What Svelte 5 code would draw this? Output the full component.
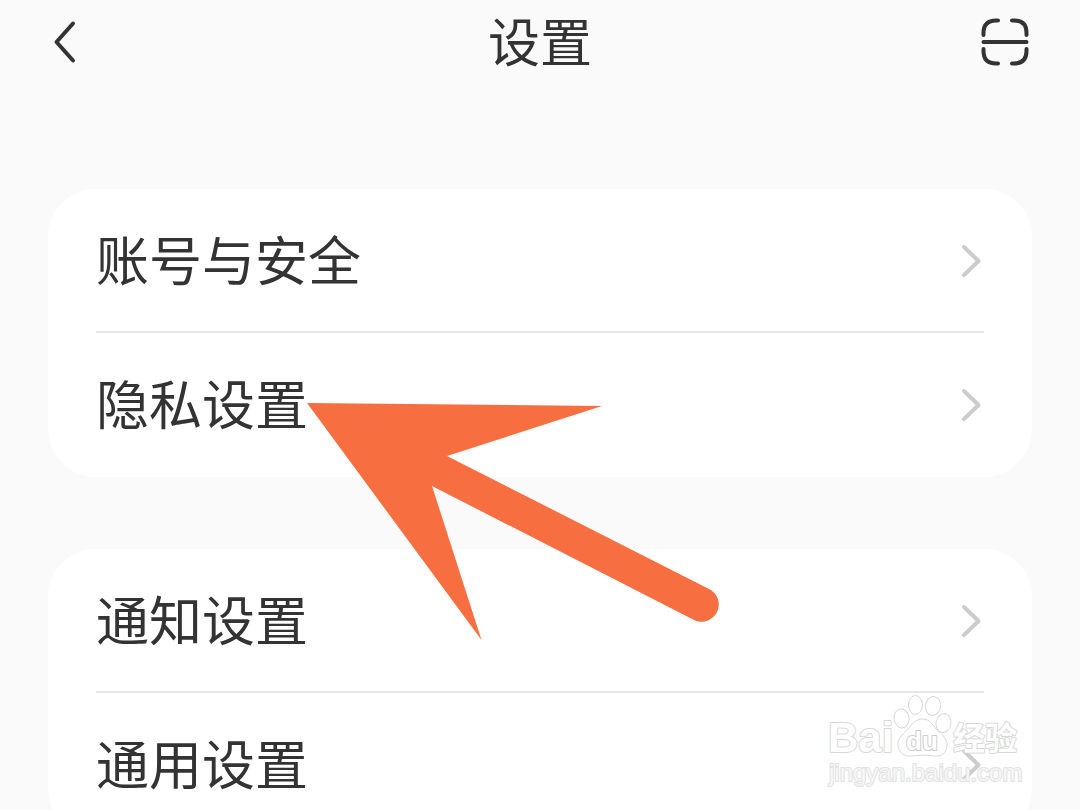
<script lang="ts">
  interface Item {
    label: string;
    href: string;
  }

  const groups: Item[][] = [
    [
      { label: "账号与安全", href: "#account" },
      { label: "隐私设置", href: "#privacy" },
    ],
    [
      { label: "通知设置", href: "#notifications" },
      { label: "通用设置", href: "#general" },
    ],
  ];
</script>

<div class="page" lang="zh-CN">
  <header class="top-bar">
    <button class="icon-button" aria-label="返回">
      <svg width="34" height="48" viewBox="0 0 34 48">
        <path d="M25 5.500 8.500 24 25 42.500" />
      </svg>
    </button>
    <h1>设置</h1>
    <button class="icon-button" aria-label="扫一扫">
      <svg width="50" height="50" viewBox="0 0 50 50">
        <path
          d="M3.500 18V16Q3.500 3.500 16 3.500H18M32 3.500H34Q46.500 3.500 46.500 16V18M3.500 32V34Q3.500 46.500 16 46.500H18M32 46.500H34Q46.500 46.500 46.500 34V32M3.500 25H46.500"
        />
      </svg>
    </button>
  </header>

  <main>
    {#each groups as items}
      <ul class="card">
        {#each items as item (item.href)}
          <li>
            <a class="row" href={item.href}>
              <span class="label">{item.label}</span>
              <svg class="chevron" width="28" height="36" viewBox="0 0 28 36">
                <path d="M8 4 22.500 18 8 32" />
              </svg>
            </a>
          </li>
        {/each}
      </ul>
    {/each}
  </main>

  <svg class="pointer" width="414" height="240" viewBox="0 0 414 240">
    <path
      d="M0 0 295 3 140 53 402 186A17 17 0 0 1 387 217L125 83 174.500 237Z"
    />
  </svg>

  <svg class="watermark" width="200" height="100" viewBox="0 0 200 100">
    <g class="paw">
      <ellipse cx="73.500" cy="28.500" rx="7.500" ry="9.500" transform="rotate(-8 73 28)" />
      <ellipse cx="87.500" cy="15" rx="7" ry="9.500" />
      <ellipse cx="105" cy="16" rx="7.500" ry="9.500" transform="rotate(10 105 16)" />
      <ellipse cx="115.500" cy="33" rx="7.500" ry="9.500" transform="rotate(10 115 33)" />
      <path
        d="M95 29C102 29 105 36 110 41C115 45 119 49 119 55C119 63 113 67 106 66C99 65 90 65 84 66C76 67 70 62 70 54C70 47 77 43 81 38C85 33 88 29 95 29Z"
      />
    </g>
    <text class="brand" x="0" y="62">Bai</text>
    <text class="du" x="78" y="60">du</text>
    <text class="cn" x="125" y="60">经验</text>
    <text class="url" x="1" y="91">jingyan.baidu.com</text>
  </svg>
</div>

<style>
  :global(body) {
    background: #fafafa;
  }
  .page {
    position: relative;
    height: 100vh;
    overflow: hidden;
    background: #fafafa;
    color: #333;
    font-family: "Noto Sans CJK SC", sans-serif;
  }
  .top-bar {
    display: flex;
    align-items: center;
    justify-content: space-between;
    height: 84px;
    padding: 0 48px;
  }
  h1 {
    margin: 0;
    padding-bottom: 4px;
    font-size: 52px;
    font-weight: 400;
    line-height: 72px;
  }
  .icon-button {
    display: flex;
    align-items: center;
    width: 54px;
    padding: 0;
    border: none;
    background: transparent;
    cursor: pointer;
  }
  .icon-button:last-child {
    justify-content: center;
  }
  .icon-button path {
    fill: none;
    stroke: #333;
    stroke-width: 4;
    stroke-linecap: round;
    stroke-linejoin: round;
  }
  main {
    display: flex;
    flex-direction: column;
    gap: 72px;
    padding: 105px 48px 72px;
  }
  .card {
    margin: 0;
    padding: 0 48px;
    list-style: none;
    background: #fff;
    border-radius: 48px;
  }
  .row {
    display: flex;
    align-items: center;
    justify-content: space-between;
    box-sizing: border-box;
    height: 144px;
    color: inherit;
    font-size: 53px;
    line-height: 72px;
    text-decoration: none;
  }
  .label {
    padding-bottom: 6px;
  }
  li + li {
    position: relative;
  }
  li + li::before {
    content: "";
    position: absolute;
    top: -2px;
    left: 0;
    right: 0;
    height: 2px;
    background: #e6e6e6;
  }
  .chevron path {
    fill: none;
    stroke: #ccc;
    stroke-width: 4;
    stroke-linecap: round;
    stroke-linejoin: round;
  }
  .pointer {
    position: absolute;
    top: 403px;
    left: 307px;
    fill: #f76f40;
    pointer-events: none;
  }
  .watermark {
    position: absolute;
    top: 690px;
    right: 52px;
    overflow: visible;
    fill: #fff;
    stroke: #d8d8d8;
    stroke-width: 1;
    pointer-events: none;
  }
  .watermark text {
    paint-order: stroke;
    stroke-width: 2;
    stroke-linejoin: round;
  }
  .brand {
    font: 700 42px "Liberation Sans", sans-serif;
  }
  .watermark .du {
    stroke: #ccc;
    font: 700 26px "Liberation Sans", sans-serif;
  }
  .cn {
    font: 700 32px "Noto Sans CJK SC", sans-serif;
  }
  .watermark .url {
    fill-opacity: 0.7;
    stroke: #e2e2e2;
    font: 400 24px "Liberation Sans", sans-serif;
  }
</style>
